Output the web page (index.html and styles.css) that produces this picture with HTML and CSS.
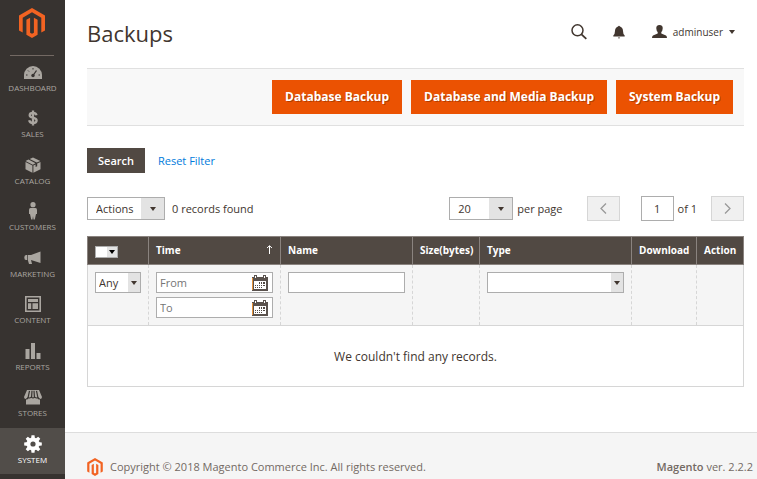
FILE: index.html
```html
<!DOCTYPE html>
<html lang="en">
<head>
<meta charset="utf-8">
<meta name="viewport" content="width=device-width, initial-scale=1">
<title>Backups</title>
<link rel="stylesheet" href="styles.css">
</head>
<body>
<svg class="defs" aria-hidden="true">
  <symbol id="logo" viewBox="0 0 26 30">
    <path d="M13 0L26 7.5V22.5L22.3 24.6V9.7L13 4.3L3.7 9.7V24.6L0 22.5V7.5Z"/>
    <path d="M7.4 11.8L11.1 9.7V24.7L13 25.8L14.9 24.7V9.7L18.6 11.8V26.8L13 30L7.4 26.8Z"/>
  </symbol>
  <symbol id="calendar" viewBox="0 0 16 16">
    <path fill="#5a524d" d="M0 2H2V0H5V2H11V0H14V2H16V16H0Z"/>
    <path fill="#fff" d="M2 6H14V14H2Z"/>
    <path fill="#fff" d="M3 1H4V3H3ZM12 1H13V3H12Z"/>
    <path fill="#514943" d="M7 7H8V9H7ZM9 7H10V9H9ZM11 7H13V9H11ZM3 10H4V11H3ZM5 10H6V11H5ZM7 10H8V11H7ZM9 10H10V11H9ZM11 10H13V11H11ZM3 12H4V13H3ZM5 12H6V13H5ZM7 12H8V13H7ZM9 12H10V13H9Z"/>
    <path fill="#e8943a" d="M0 3H1V15H0Z"/>
  </symbol>
</svg>
<div class="app">
  <aside class="sidebar">
    <a class="brand" href="#" aria-label="Magento"><svg width="26" height="30"><use href="#logo"/></svg></a>
    <nav class="menu">
      <a href="#"><span class="icon"><svg width="18" height="13" viewBox="0 0 18 13"><path fill="currentColor" d="M0 13V9a9 9 0 0 1 18 0v4Z"/><path stroke="#373330" stroke-width="1.3" fill="none" d="M9 9.5L12.5 4.5"/><circle cx="9" cy="9.5" r="1.7" fill="#373330"/><path stroke="#373330" d="M2 9h1.5M4 4.500l1 1M9 2v1.500M14.500 9H16" fill="none"/></svg></span>Dashboard</a>
      <a href="#"><span class="icon"><svg width="10" height="16" viewBox="0 0 10 16"><path fill="none" stroke="currentColor" stroke-width="2.300" d="M8.500 5.200C8 3.400 6.700 3 5 3C3 3 1.700 3.800 1.700 5.300C1.700 8.600 8.600 6.800 8.600 10.500C8.600 12.200 7 13 5 13C2.800 13 1.500 12.200 1.200 10.300M5 0.500V15.500"/></svg></span>Sales</a>
      <a href="#"><span class="icon"><svg width="16" height="16" viewBox="0 0 16 16"><path fill="currentColor" d="M0.500 4L3.500 2.600L10.500 6.200L7.800 7.700ZM4.700 2L8 0.500L15.300 4L11.800 5.600ZM0.500 5L7.400 8.600V15.800L0.500 12.300ZM8.400 8.600L10.600 7.500V10L12.200 9.200V6.600L15.500 5V12.300L8.400 15.800Z"/></svg></span>Catalog</a>
      <a href="#"><span class="icon"><svg width="10" height="18" viewBox="0 0 10 18"><circle cx="5" cy="2.700" r="2.600" fill="currentColor"/><path fill="currentColor" d="M2.500 6H7.500Q9 6 9 8V12H8L6.800 17.500H5.500L5 14L4.500 17.500H3.200L2 12H1V8Q1 6 2.500 6Z"/></svg></span>Customers</a>
      <a href="#"><span class="icon"><svg width="17" height="14" viewBox="0 0 17 14"><path fill="currentColor" d="M16.500 0.500V12L7 9L8 13H5L3.800 9H2Q0.300 9 0.300 6.500Q0.300 4 2 4H7Z"/><path stroke="#373330" stroke-width="0.700" d="M3.500 4V9" /></svg></span>Marketing</a>
      <a href="#"><span class="icon"><svg width="16" height="16" viewBox="0 0 16 16"><path fill="none" stroke="currentColor" stroke-width="1.600" d="M0.800 0.800H15.200V15.200H0.800Z"/><path fill="currentColor" d="M3 3H13V6H3ZM3 7.300H6.200V13H3ZM7.500 7.300H13V13H7.500Z"/></svg></span>Content</a>
      <a href="#"><span class="icon"><svg width="16" height="17" viewBox="0 0 16 17"><path fill="currentColor" d="M0.500 7H4.500V17H0.500ZM6 1H10V17H6ZM11.500 11H15.500V17H11.500Z"/></svg></span>Reports</a>
      <a href="#"><span class="icon"><svg width="18" height="15" viewBox="0 0 18 15"><path fill="currentColor" d="M3 0H15L18 7Q18 9 16 9V14.500H2V9Q0 9 0 7Z"/><path stroke="#373330" stroke-width="1.200" fill="none" d="M5.500 0.800L4 8M8 0.800L7.500 8M10 0.800L10.500 8M12.500 0.800L14 8M2 9Q4 9 4 7Q5 9 7.500 7Q9 9 10.500 7Q13 9 14 7Q14 9 16 9"/></svg></span>Stores</a>
      <a href="#" class="active"><span class="icon"><svg width="18" height="18" viewBox="-9 -9 18 18"><g fill="currentColor"><circle r="6.500"/><g id="teeth"><path d="M-2 -5L-1.500 -8.800H1.500L2 -5ZM-2 5L-1.500 8.800H1.500L2 5ZM-5 -2L-8.800 -1.500V1.500L-5 2ZM5 -2L8.800 -1.500V1.500L5 2Z"/></g><use href="#teeth" transform="rotate(45)"/></g><circle r="2.600" fill="#514d49"/></svg></span>System</a>
    </nav>
  </aside>
  <div class="page">
    <main class="content">
      <header class="top">
        <h1>Backups</h1>
        <div class="tools">
          <button type="button" aria-label="Search"><svg width="16" height="16" viewBox="0 0 16 16"><circle cx="6.500" cy="6.300" r="5.500" fill="none" stroke="#41362f" stroke-width="1.500"/><path d="M10.500 10.300L15.300 14.800" stroke="#41362f" stroke-width="1.800"/></svg></button>
          <button type="button" class="bell" aria-label="Notifications"><svg width="12" height="14" viewBox="0 0 12 14"><path fill="#41362f" d="M5 1.500Q6 0 7 1.500Q10 2.500 10 6Q10 9 11.700 10.500V11.500H0.300V10.500Q2 9 2 6Q2 2.500 5 1.500ZM4.800 12.500H7.200L6 13.700Z"/></svg></button>
          <button type="button" class="user"><svg width="15" height="13" viewBox="0 0 15 13"><path fill="#41362f" d="M7.500 0Q11 0 10.700 3.500Q10.500 6 9.300 7V8.500L14 10.500Q15 11 15 13H0Q0 11 1 10.500L5.700 8.500V7Q4.500 6 4.300 3.500Q4 0 7.500 0Z"/></svg><span>adminuser</span><i class="caret"></i></button>
        </div>
      </header>
      <div class="actions">
        <button type="button">Database Backup</button>
        <button type="button">Database and Media Backup</button>
        <button type="button">System Backup</button>
      </div>
      <div class="search-row">
        <button type="button" class="search">Search</button>
        <a href="#">Reset Filter</a>
      </div>
      <div class="grid-bar">
        <span class="select mass"><select aria-label="Actions"><option>Actions</option></select></span>
        <span class="found">0 records found</span>
        <span class="select size"><select id="limit"><option>20</option></select></span>
        <label for="limit">per page</label>
        <button type="button" class="pager prev" aria-label="Previous page"><svg width="7" height="11" viewBox="0 0 7 11"><path d="M6 0.500L1 5.500L6 10.500"/></svg></button>
        <input id="current" class="current" type="text" value="1" aria-label="Current page">
        <label for="current">of 1</label>
        <button type="button" class="pager" aria-label="Next page"><svg width="7" height="11" viewBox="0 0 7 11"><path d="M1 0.500L6 5.500L1 10.500"/></svg></button>
      </div>
      <table>
        <colgroup><col class="c-check"><col class="c-wide"><col class="c-wide"><col class="c-size"><col><col class="c-download"><col class="c-action"></colgroup>
        <thead>
          <tr class="heads">
            <th><span class="multi"><input type="checkbox" aria-label="Select all"><button type="button" aria-label="Selection options"><i class="caret"></i></button></span></th>
            <th><span class="sorted">Time<svg width="7" height="9" viewBox="0 0 7 9"><path d="M3.500 9V1M1 3L3.500 0.700L6 3" fill="none" stroke="#fff"/></svg></span></th>
            <th>Name</th><th>Size(bytes)</th><th>Type</th><th>Download</th><th>Action</th>
          </tr>
          <tr class="filters">
            <td><span class="select small"><select aria-label="Selected"><option>Any</option></select></span></td>
            <td>
              <span class="date"><input type="text" placeholder="From" aria-label="From"><button type="button" aria-label="Pick start date"><svg width="16" height="16"><use href="#calendar"/></svg></button></span>
              <span class="date"><input type="text" placeholder="To" aria-label="To"><button type="button" aria-label="Pick end date"><svg width="16" height="16"><use href="#calendar"/></svg></button></span>
            </td>
            <td><input class="text" type="text" aria-label="Name"></td>
            <td></td>
            <td><span class="select small"><select aria-label="Type"><option></option></select></span></td>
            <td></td><td></td>
          </tr>
        </thead>
        <tbody><tr><td colspan="7" class="empty">We couldn't find any records.</td></tr></tbody>
      </table>
    </main>
    <footer>
      <svg width="16" height="18"><use href="#logo"/></svg>
      <span>Copyright © 2018 Magento Commerce Inc. All rights reserved.</span>
      <span class="version"><strong>Magento</strong> ver. 2.2.2</span>
    </footer>
  </div>
</div>
</body>
</html>
```
FILE: styles.css
```css
* { box-sizing: border-box; }
body {
  margin: 0;
  font: 11px/16px "Open Sans", "Noto Sans", sans-serif;
  color: #41362f;
  background: #fff;
}
button, input, select { font: inherit; color: inherit; margin: 0; padding: 0; border: 0; border-radius: 0; background: none; }
a { text-decoration: none; color: #007bdb; }
svg { display: block; flex: none; }
.defs { position: absolute; width: 0; height: 0; }

.app { display: flex; min-height: 100vh; }

/* Sidebar */
.sidebar { flex: none; width: 65px; display: flex; flex-direction: column; padding-bottom: 5px; background: #373330; }
.brand { display: flex; justify-content: center; height: 56px; margin: 0 11px 0 10px; padding-top: 8px; border-bottom: 1px solid #736963; }
.brand svg, footer svg { fill: #f26322; }
.menu { flex: 1; display: flex; flex-direction: column; }
.menu a {
  flex: 1;
  display: flex;
  flex-direction: column;
  align-items: center;
  padding-top: 6px;
  font-size: 8px;
  line-height: 12px;
  text-transform: uppercase;
  color: #aaa6a0;
}
.menu .icon { display: flex; align-items: center; height: 20px; }
.menu .active { background: #514d49; color: #fff; }

/* Page */
.page { flex: 1; min-width: 0; display: flex; flex-direction: column; }
.content { padding: 0 13px 45px 22px; }
.top { display: flex; justify-content: space-between; align-items: center; height: 68px; padding-bottom: 2px; }
h1 { margin: 0; font-size: 22px; line-height: 30px; font-weight: 400; }
.tools { display: flex; align-items: center; padding: 0 9px 3px 0; }
.tools button { display: flex; align-items: center; }
.tools .bell { margin: 0 27px 0 26px; }
.user { gap: 6px; font-size: 10px; }
.caret { width: 0; height: 0; border: 3px solid transparent; border-top: 4px solid #41362f; border-bottom: 0; }

.actions {
  display: flex;
  justify-content: flex-end;
  gap: 9px;
  padding: 11px;
  background: #f8f8f8;
  border-top: 1px solid #e0e0e0;
  border-bottom: 1px solid #e0e0e0;
}
.actions button {
  height: 34px;
  padding: 0 13px;
  font-size: 12px;
  font-weight: 700;
  color: #fff;
  background: #eb5202;
  text-shadow: 1px 1px 0 rgba(0, 0, 0, .25);
}

.search-row { display: flex; align-items: center; gap: 13px; margin-top: 22px; }
.search { height: 25px; padding: 0 11px; font-weight: 600; color: #fff; background: #514943; }

.grid-bar { display: flex; align-items: center; height: 25px; margin: 23px 0 15px; }
.found { margin: 0 auto 0 7px; }
.grid-bar label { margin-left: 4px; }
.select { position: relative; display: block; height: 23px; }
.select select {
  appearance: none;
  width: 100%;
  height: 100%;
  padding: 0 24px 0 8px;
  border: 1px solid #adadad;
  background: linear-gradient(#e3e3e3, #e3e3e3) right / 23px 100% no-repeat #fff;
}
.select::after {
  content: "";
  position: absolute;
  right: 9px;
  top: 50%;
  margin-top: -2px;
  border: 3px solid transparent;
  border-top: 4px solid #41362f;
  border-bottom: 0;
  pointer-events: none;
}
.mass { width: 78px; }
.size { width: 64px; }
.pager { display: flex; align-items: center; justify-content: center; width: 33px; height: 25px; background: #f0f0f0; border: 1px solid #d6d6d6; }
.pager path { fill: none; stroke: #999; stroke-width: 1.300; }
.prev { margin: 0 21px 0 24px; }
.current { width: 33px; height: 25px; border: 1px solid #adadad; text-align: center; }
label + .pager:last-child { margin-left: 14px; }

/* Grid */
table { width: 100%; table-layout: fixed; border-collapse: collapse; }
.c-check { width: 61px; }
.c-wide { width: 132px; }
.c-size { width: 67px; }
.c-download { width: 65px; }
.c-action { width: 47px; }
th, td { padding: 0 7px; text-align: left; }
th { height: 28px; padding-bottom: 2px; font-size: 10px; font-weight: 700; white-space: nowrap; color: #fff; background: #514943; border: 1px solid #8a837f; }
.heads th:first-child { padding: 2px 7px 0; }
.sorted { display: flex; justify-content: space-between; align-items: center; }
.multi { display: flex; width: 23px; height: 12px; border: 1px solid #adadad; background: #fff; }
.multi input { appearance: none; width: 11px; height: 10px; background: #fff; }
.multi button { flex: 1; display: flex; align-items: center; justify-content: center; background: #e3e3e3; }
.multi .caret { border-top-color: #000; }
.filters td { padding: 7px; vertical-align: top; background: #f5f5f5; border: 1px dashed #d6d6d6; border-bottom: 1px solid #d6d6d6; }
.filters td:first-child { border-left-style: solid; }
.filters td:last-child { border-right-style: solid; }
.small { height: 21px; }
.small select { padding: 0 14px 0 3px; background-size: 12px 100%; }
.small::after { right: 4px; }
.text { display: block; width: 100%; height: 21px; padding: 0 4px; background: #fff; border: 1px solid #adadad; }
.date { display: flex; align-items: center; height: 21px; padding: 0 4px 0 3px; background: #fff; border: 1px solid #adadad; }
.date + .date { margin-top: 4px; }
.date input { flex: 1; min-width: 0; }
.date input::placeholder { color: #757575; }
.empty { height: 61px; padding-top: 2px; text-align: center; font-size: 12px; border: 1px solid #d6d6d6; }

footer { flex: 1; display: flex; align-items: flex-start; gap: 7px; padding: 25px 4px 3px 22px; color: #736963; background: #f5f5f5; border-top: 1px solid #ddd; }
footer span { line-height: 18px; }
.version { margin-left: auto; }
.version strong { font-weight: 600; }
```
